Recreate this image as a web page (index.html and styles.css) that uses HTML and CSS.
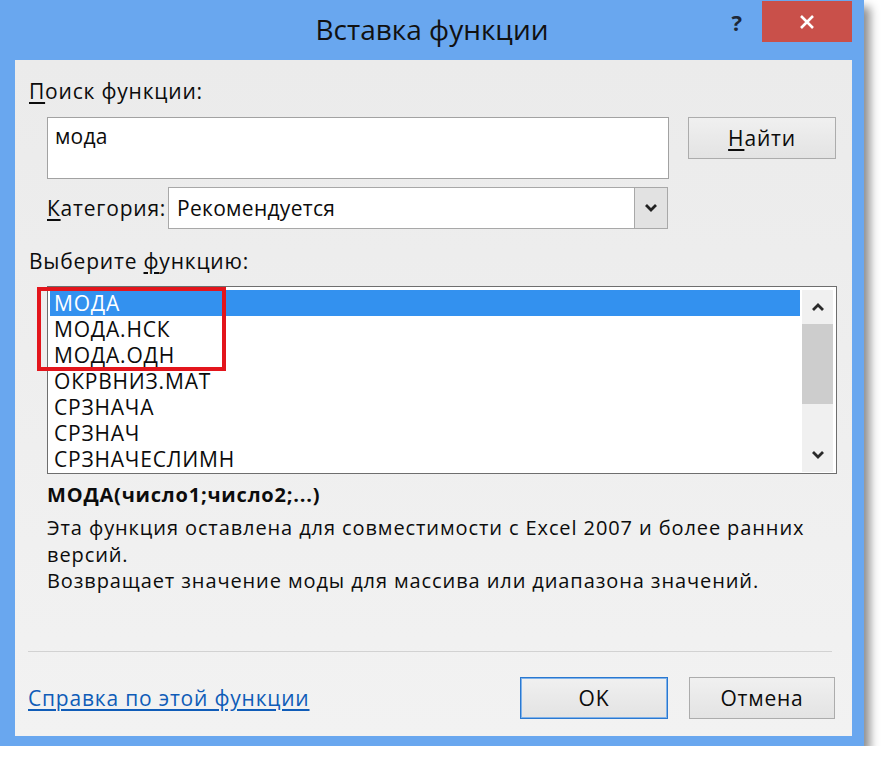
FILE: index.html
```html
<!DOCTYPE html>
<html lang="ru">
<head>
  <meta charset="UTF-8" />
  <title>Вставка функции</title>
  <link rel="stylesheet" href="styles.css">
</head>
<body>
  <div class="window">
    <div class="titlebar">
      <div></div>
      <div class="title">Вставка функции</div>
      <div class="controls">
        <span class="help">?</span>
        <span class="close">
          <svg width="18" height="16" viewBox="0 0 18 16"><path d="M3 2 L15 14 M15 2 L3 14" stroke="#fff" stroke-width="2.6" fill="none"/></svg>
        </span>
      </div>
    </div>

    <div class="frame">
      <div class="client">
        <div class="label"><u>П</u>оиск функции:</div>

        <div class="search-row">
          <div class="search-box">мода</div>
          <div class="btn find"><u>Н</u>айти</div>
        </div>

        <div class="category-row">
          <span class="cat-label"><u>К</u>атегория:</span>
          <div class="combo">
            <span class="combo-text">Рекомендуется</span>
            <span class="combo-arrow">
              <svg width="14" height="10" viewBox="0 0 14 10"><path d="M2 2 L7 7 L12 2" stroke="#222" stroke-width="2.8" fill="none"/></svg>
            </span>
          </div>
        </div>

        <div class="label list-label">Выберите <u>ф</u>ункцию:</div>

        <div class="listbox">
          <ul class="items">
            <li class="selected">МОДА</li>
            <li>МОДА.НСК</li>
            <li>МОДА.ОДН</li>
            <li>ОКРВНИЗ.МАТ</li>
            <li>СРЗНАЧА</li>
            <li>СРЗНАЧ</li>
            <li>СРЗНАЧЕСЛИМН</li>
          </ul>
          <div class="scrollbar">
            <span class="arrow">
              <svg width="14" height="10" viewBox="0 0 14 10"><path d="M2 8 L7 3 L12 8" stroke="#2a2a2a" stroke-width="2.8" fill="none"/></svg>
            </span>
            <div class="track"><div class="thumb"></div></div>
            <span class="arrow">
              <svg width="14" height="10" viewBox="0 0 14 10"><path d="M2 2 L7 7 L12 2" stroke="#2a2a2a" stroke-width="2.8" fill="none"/></svg>
            </span>
          </div>
          <div class="mark"></div>
        </div>

        <div class="signature">МОДА(число1;число2;...)</div>
        <div class="desc">
          Эта функция оставлена для совместимости с Excel 2007 и более ранних<br>
          версий.<br>
          Возвращает значение моды для массива или диапазона значений.
        </div>

        <div class="separator"></div>

        <div class="footer">
          <a class="help-link" href="#">Справка по этой функции</a>
          <div class="btn ok">OK</div>
          <div class="btn cancel">Отмена</div>
        </div>
      </div>
    </div>
  </div>
</body>
</html>
```

FILE: styles.css
```css
* {
  box-sizing: border-box;
}

body {
  margin: 0;
  background: #ffffff;
  font-family: "Open Sans", "Noto Sans", sans-serif;
  color: #0c0c0c;
}

u {
  text-underline-offset: 3px;
}

.window {
  width: 864px;
  height: 746px;
  background: #69a7ef;
  display: flex;
  flex-direction: column;
  box-shadow: 6px 7px 9px rgba(0, 0, 0, 0.45);
}

.titlebar {
  height: 60px;
  display: grid;
  grid-template-columns: 1fr auto 1fr;
}

.title {
  font-size: 28px;
  line-height: 36px;
  padding-top: 11px;
  color: #111;
}

.controls {
  justify-self: end;
  display: flex;
  align-items: flex-start;
  padding-right: 12px;
  padding-top: 1px;
}

.help {
  font-weight: 700;
  font-size: 22px;
  line-height: 24px;
  margin-top: 9px;
  margin-right: 20px;
  color: #1d2838;
}

.close {
  width: 90px;
  height: 41px;
  background: #c9504a;
  display: flex;
  align-items: center;
  justify-content: center;
}

.frame {
  flex: 1;
  display: flex;
  padding: 0 12px 10px 15px;
}

.client {
  flex: 1;
  display: flex;
  flex-direction: column;
  background: linear-gradient(#ebebeb, #f2f2f2);
  padding: 18px 14px 17px 14px;
  font-size: 21px;
  line-height: 26px;
  letter-spacing: 0.8px;
}

.search-row {
  display: flex;
  margin-top: 13px;
  padding-left: 18px;
}

.search-box {
  width: 622px;
  height: 62px;
  border: 1px solid #a2a2a2;
  background: #fff;
  padding: 5px 7px;
  letter-spacing: 0.2px;
}

.btn {
  height: 42px;
  display: flex;
  align-items: center;
  justify-content: center;
  border: 1px solid #acacac;
  background: linear-gradient(#f0f0f0, #e3e3e3);
}

.find {
  width: 148px;
  margin-left: 19px;
}

.category-row {
  display: flex;
  align-items: center;
  margin-top: 8px;
  padding-left: 18px;
}

.cat-label {
  width: 121px;
}

.combo {
  width: 500px;
  height: 42px;
  display: flex;
  border: 1px solid #a8a8a8;
  background: #fff;
}

.combo-text {
  flex: 1;
  padding-left: 8px;
  align-self: center;
  letter-spacing: 0.3px;
}

.combo-arrow {
  width: 33px;
  display: flex;
  align-items: center;
  justify-content: center;
  border-left: 1px solid #a8a8a8;
  background: #e2e2e2;
}

.list-label {
  margin-top: 19px;
}

.listbox {
  position: relative;
  width: 790px;
  height: 188px;
  margin: 12px 0 0 18px;
  display: flex;
  padding: 3px 3px 1px 2px;
  border: 1px solid #6e6e6e;
  background: #fff;
}

.items {
  flex: 1;
  margin: 0;
  padding: 0;
  list-style: none;
}

.items li {
  height: 26px;
  padding-left: 4px;
}

.items .selected {
  background: #3391ef;
  color: #fff;
}

.scrollbar {
  width: 31px;
  margin-left: 2px;
  display: flex;
  flex-direction: column;
  background: #f0f0f0;
}

.arrow {
  height: 34px;
  display: flex;
  align-items: center;
  justify-content: center;
}

.track {
  flex: 1;
}

.thumb {
  height: 80px;
  background: #cdcdcd;
}

.mark {
  position: absolute;
  left: -11px;
  top: 0;
  width: 189px;
  height: 84px;
  border: 4px solid #e3151c;
}

.signature {
  margin: 8px 0 0 18px;
  font-size: 20px;
  font-weight: 700;
}

.desc {
  margin: 7px 0 0 18px;
  font-size: 20px;
  line-height: 26.5px;
  letter-spacing: 0.9px;
}

.separator {
  margin: auto 6px 0 -1px;
  height: 1px;
  background: #d2d2d2;
}

.footer {
  display: flex;
  align-items: center;
  gap: 21px;
  margin: 25px 3px 0 -1px;
}

.help-link {
  margin-right: auto;
  color: #0f5cb8;
  text-underline-offset: 3px;
}

.ok {
  width: 148px;
  border: 1px solid #2a78d0;
  box-shadow: inset 0 0 0 1px #7fb2ea;
}

.cancel {
  width: 146px;
}
```
